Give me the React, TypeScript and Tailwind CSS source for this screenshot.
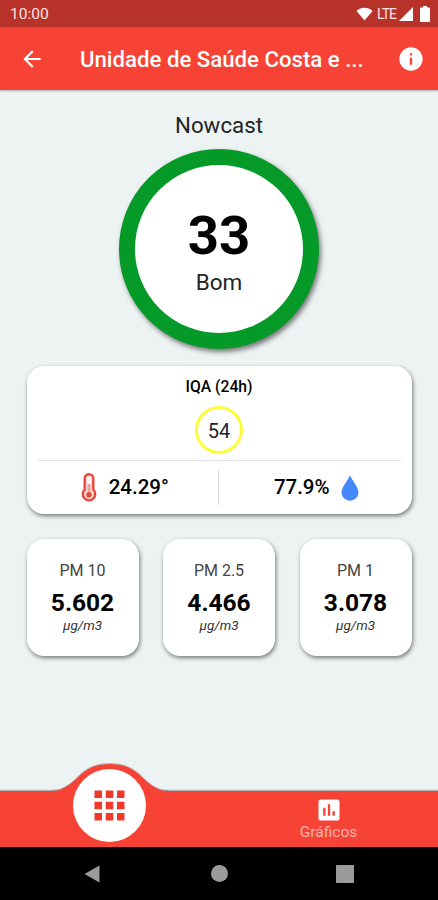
import type { ReactNode } from 'react';
import { MdApps, MdArrowBack, MdInfo, MdInsertChart } from 'react-icons/md';

const particles = [
  { label: 'PM 10', value: '5.602' },
  { label: 'PM 2.5', value: '4.466' },
  { label: 'PM 1', value: '3.078' },
];

function StatusBar() {
  return (
    <div className="flex h-[27px] shrink-0 items-center justify-between bg-[#b73228] pl-[10px] pr-[8px] text-white">
      <span className="pt-[3px] text-[15.5px] leading-none text-[#fde3e1]">10:00</span>
      <div className="flex items-center">
        <svg width="17" height="14" viewBox="0 0 18 14" fill="#fff">
          <path d="M9 14 0.5 3.8C5.3 -0.6 12.7 -0.6 17.5 3.8Z" />
        </svg>
        <span className="ml-[4px] text-[14px] leading-none tracking-[-1px] text-[#fde3e1]">LTE</span>
        <svg className="ml-[3px]" width="14" height="14" viewBox="0 0 14 14" fill="#fff">
          <path d="M14 0V14H0Z" />
        </svg>
        <svg className="ml-[7px]" width="10" height="16" viewBox="0 0 10 16" fill="#fff">
          <path d="M3 0h4v1.6h2a1 1 0 0 1 1 1V15a1 1 0 0 1-1 1H1a1 1 0 0 1-1-1V2.6a1 1 0 0 1 1-1h2Z" />
        </svg>
      </div>
    </div>
  );
}

function Header() {
  return (
    <header className="z-10 flex h-[63px] shrink-0 items-center bg-[#f64336] pl-[19px] pr-[13px] text-white shadow-[0_1px_2px_rgba(0,0,0,0.3)]">
      <button aria-label="Voltar">
        <MdArrowBack size={26} />
      </button>
      <h1 className="ml-[35px] whitespace-nowrap pt-[1px] text-[22.2px] font-medium leading-[30px]">
        Unidade de Saúde Costa e ...
      </h1>
      <button aria-label="Informações" className="ml-auto">
        <MdInfo size={28} />
      </button>
    </header>
  );
}

function Card({ className, children }: { className: string; children: ReactNode }) {
  return (
    <div className={`rounded-[17px] bg-white shadow-[1px_2px_4px_rgba(0,0,0,0.5)] ${className}`}>
      {children}
    </div>
  );
}

function Thermometer() {
  return (
    <svg width="16" height="29" viewBox="0 0 16 29" fill="none">
      <path
        d="M3.7 5.5a4.3 4.3 0 0 1 8.6 0V16.7a6.2 6.2 0 1 1-8.6 0Z"
        fill="#fbdedb"
        stroke="#e8493f"
        strokeWidth="2.4"
      />
      <path d="M8 5.5v5" stroke="#fff" strokeWidth="3" strokeLinecap="round" />
      <path d="M8 11v8" stroke="#f0a09a" strokeWidth="3" />
      <circle cx="8" cy="21.7" r="2.8" fill="#e8493f" />
    </svg>
  );
}

function Gauge() {
  return (
    <div className="mt-[10px] flex h-[200px] w-[200px] flex-col items-center rounded-full border-[16px] border-[#059a27] bg-white shadow-[2px_3px_5px_rgba(0,0,0,0.5)]">
      <span className="mt-[37px] text-[54.5px] font-bold leading-[66px] text-black">33</span>
      <span className="text-[22.5px] leading-[28px]">Bom</span>
    </div>
  );
}

function DailyIndex() {
  return (
    <Card className="mt-[17px] flex h-[148px] w-[385px] flex-col items-center px-[11px]">
      <h2 className="mt-[11px] text-[15.7px] font-medium leading-5 text-black">IQA (24h)</h2>
      <div className="mt-[9px] flex h-[48px] w-[48px] items-center justify-center rounded-full border-[3px] border-[#fcfc3c] pt-px text-[20px]">
        54
      </div>
      <div className="mt-[6px] flex w-full items-center border-t border-[#e0e0e0] pt-[9px] text-[20.5px] font-medium text-black">
        <div className="flex h-[35px] w-1/2 items-center justify-center gap-[12px] border-r border-[#dcdcdc] pr-[6px]">
          <Thermometer />
          <span>24.29°</span>
        </div>
        <div className="flex h-[35px] w-1/2 items-center justify-center gap-[11px] pl-[13px]">
          <span>77.9%</span>
          <svg width="18" height="26" viewBox="0 0 18 26" fill="#4489fb">
            <path d="M9 0C10 4 17.5 12 17.5 17.3a8.5 8.5 0 0 1-17 0C0.5 12 8 4 9 0Z" />
          </svg>
        </div>
      </div>
    </Card>
  );
}

function BottomBar() {
  return (
    <nav className="relative flex h-[56px] shrink-0 bg-[#f64336] shadow-[0_-1px_1px_rgba(0,0,0,0.25)]">
      {/* raised part of the bar behind the active tab */}
      <svg className="absolute left-[50px] top-[-28px]" width="120" height="30" viewBox="0 0 120 30">
        <path
          d="M0 28.5C12 28 20 22 28 14C36 5.5 46 1 60 1S84 5.5 92 14C100 22 108 28 120 28.5V30H0Z"
          fill="#f64336"
        />
        <path
          d="M2 27.5C13 27 20 21.5 28 13.5C36 5 46 0.5 60 0.5S84 5 92 13.5C100 21.5 107 27 118 27.5"
          fill="none"
          stroke="rgba(90,60,60,0.3)"
        />
      </svg>
      <div className="flex w-1/2 justify-center">
        <button
          aria-label="Painel"
          className="relative -mt-[22px] flex h-[73px] w-[73px] items-center justify-center rounded-full bg-white text-[#f0382b]"
        >
          <MdApps size={45} />
        </button>
      </div>
      <button className="flex w-1/2 flex-col items-center pt-[5px] text-[#fbb5af]">
        <MdInsertChart size={28} className="text-white" />
        <span className="text-[15.5px] leading-[16px]">Gráficos</span>
      </button>
    </nav>
  );
}

function SystemNav() {
  return (
    <div className="flex h-[53px] shrink-0 items-center bg-black pl-[84px]">
      <svg width="16" height="18" viewBox="0 0 16 18" fill="#9b9b9b">
        <path d="M15.5 0.5V17.5L0.5 9Z" />
      </svg>
      <div className="ml-[111px] h-[17px] w-[17px] rounded-full bg-[#9b9b9b]" />
      <div className="ml-[108px] h-[18px] w-[18px] rounded-[1px] bg-[#9b9b9b]" />
    </div>
  );
}

export default function App() {
  return (
    <div className="flex h-[900px] w-[438px] flex-col overflow-hidden bg-[#edf2f3] font-['Roboto',sans-serif] text-[#212426]">
      <StatusBar />
      <Header />
      <main className="flex flex-1 flex-col items-center pt-[21px]">
        <h2 className="text-[22.3px] leading-[28px]">Nowcast</h2>
        <Gauge />
        <DailyIndex />
        <div className="mt-[25px] flex w-[385px] justify-between">
          {particles.map((p) => (
            <Card key={p.label} className="flex h-[117px] w-[112px] flex-col items-center pt-[22px]">
              <span className="text-[16px] leading-5 text-[#444]">{p.label}</span>
              <span className="mt-[5px] text-[24.5px] font-bold leading-[33px] text-black">{p.value}</span>
              <span className="text-[13.5px] italic leading-[13px] text-[#333]">μg/m3</span>
            </Card>
          ))}
        </div>
      </main>
      <BottomBar />
      <SystemNav />
    </div>
  );
}
